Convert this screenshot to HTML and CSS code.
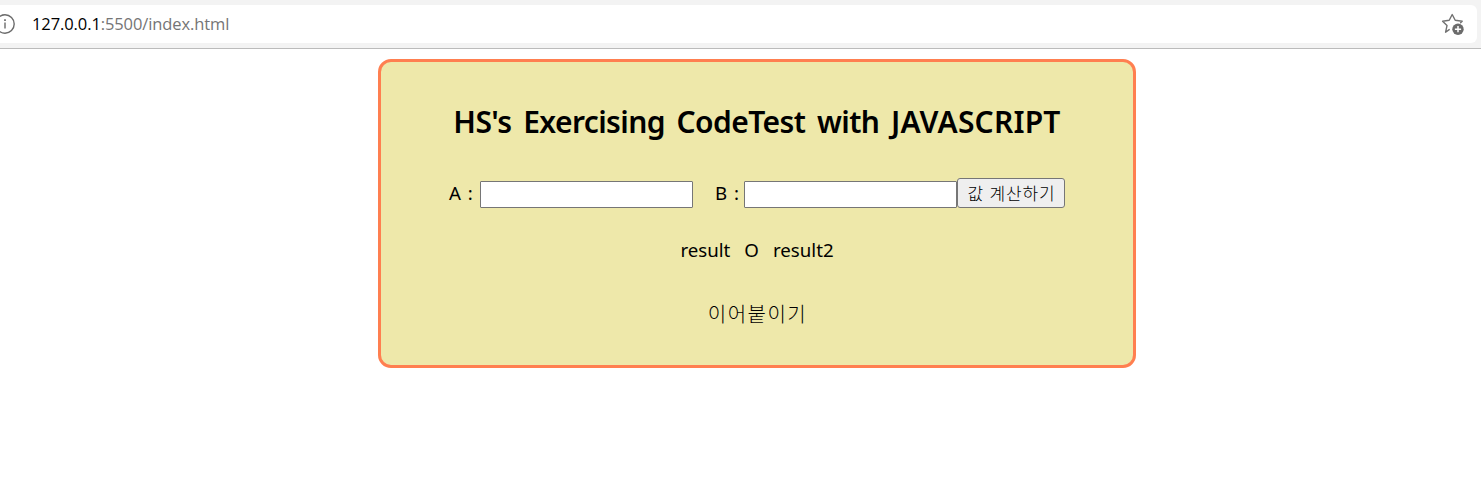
FILE: index.html
```html
<!DOCTYPE html>
<html lang="ko">
<head>
<meta charset="utf-8">
<title>CodeTest</title>
<link rel="stylesheet" href="styles.css">
</head>
<body>
<header class="toolbar">
  <div class="address">
    <svg class="info" width="20" height="20" viewBox="0 0 20 20" fill="none" stroke="#6b6b6b" stroke-width="1.4"><circle cx="10" cy="10" r="9.2"/><path d="M10 8.6v6"/><path d="M10 5.2v1.8" stroke-width="1.7"/></svg>
    <div class="url"><span class="host">127.0.0.1</span><span class="path">:5500/index.html</span></div>
    <svg class="star" width="24" height="24" viewBox="0 0 24 24"><path d="M8.2 17.6 L4.6 20.2 L6 13.6 L1.6 9.2 L8.2 8.3 L11.2 2.5 L14.2 8.3 L21.2 9.2 L19.6 10.8" fill="none" stroke="#717171" stroke-width="1.4" stroke-linejoin="round" stroke-linecap="round"/><circle cx="17" cy="17.2" r="5.7" fill="#6b6b6b"/><path d="M17 14.1v6.2M13.9 17.2h6.2" stroke="#fff" stroke-width="1.5"/></svg>
  </div>
</header>
<main class="card">
  <h1 class="title">HS's Exercising CodeTest with <span class="title-caps">JAVASCRIPT</span></h1>
  <div class="form">
    <label class="label label-a" for="a">A :</label><input class="field" id="a" type="text">
    <label class="label label-b" for="b">B :</label><input class="field" id="b" type="text"><button class="calc" type="button">값 계산하기</button>
  </div>
  <div class="results"><span class="result">result</span><span class="op">O</span><span class="result2">result2</span></div>
  <div class="join">이어붙이기</div>
</main>
</body>
</html>
```
FILE: styles.css
```css
* { box-sizing: border-box; }
body {
  margin: 0;
  background: #fff;
  color: #000;
  font-family: "Noto Sans", "Noto Sans CJK KR", sans-serif;
  font-size: 18.7px;
}
.toolbar {
  height: 49px;
  padding: 5px 4px 0 0;
  background: #f3f3f3;
  border-bottom: 1px solid #bbb;
}
.address {
  display: flex;
  align-items: center;
  height: 38px;
  padding-right: 12px;
  background: #fff;
  border-radius: 0 6px 6px 0;
}
.info { margin-left: -5px; flex: none; }
.url {
  flex: 1;
  margin-left: 17px;
  font-family: "Open Sans", sans-serif;
  font-size: 16.5px;
  letter-spacing: -0.1px;
  line-height: 38px;
  white-space: nowrap;
}
.path { color: #757575; }
.star { flex: none; }
.card {
  width: 758px;
  height: 309px;
  margin: 10px 0 0 378px;
  padding-top: 38px;
  background: #eee8aa;
  border: 3px solid #ff7f50;
  border-radius: 13px;
}
.title {
  margin: 0;
  font-size: 30px;
  font-weight: 600;
  line-height: 44px;
  letter-spacing: -0.6px;
  word-spacing: 4.5px;
  text-align: center;
  white-space: nowrap;
}
.title-caps { letter-spacing: 0.2px; }
.form {
  display: flex;
  align-items: flex-end;
  height: 30px;
  margin: 34px 0 0 68px;
}
.label { line-height: 30px; white-space: nowrap; word-spacing: 2px; }
.label-a { width: 31px; }
.label-b { width: 29px; margin-left: 22px; }
.field {
  width: 213px;
  height: 27px;
  padding: 1px 2px;
  border: 1px solid #767676;
  border-radius: 1px;
  background: #fff;
}
.calc {
  width: 108px;
  height: 30px;
  padding: 0 0 0 1px;
  border: 1px solid #767676;
  border-radius: 3px;
  background: #efefef;
  color: #000;
  font: 300 17px/26px "Noto Sans CJK KR", sans-serif;
  letter-spacing: 0.8px;
  white-space: nowrap;
}
.results {
  display: flex;
  justify-content: center;
  gap: 14px;
  height: 30px;
  margin-top: 27px;
  line-height: 30px;
}
.join {
  margin-top: 34px;
  padding-left: 1px;
  font: 300 20px/30px "Noto Sans CJK KR", sans-serif;
  letter-spacing: 1.5px;
  text-align: center;
}
```
